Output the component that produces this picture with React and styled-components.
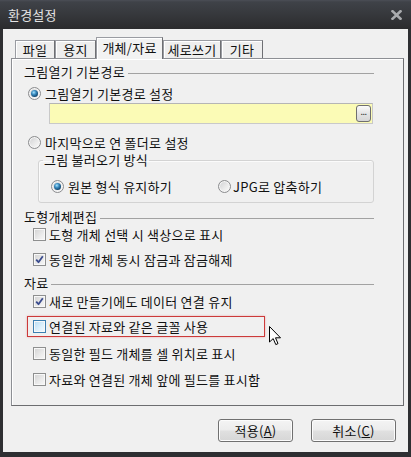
import React from "react";
import styled, { createGlobalStyle } from "styled-components";

const Global = createGlobalStyle`
  html, body { margin: 0; padding: 0; background: #2f3034; }
  body { font-family: "Noto Sans CJK KR", "Noto Sans", sans-serif; }
`;

const Window = styled.div`
  position: relative;
  width: 411px;
  height: 457px;
  box-sizing: border-box;
  background: #2e2f32;
  padding: 0 3px 5px 3px;
  display: flex;
  flex-direction: column;
  font-family: "Noto Sans CJK KR", "Noto Sans", sans-serif;
  font-size: 13px;
  letter-spacing: 0.25px;
  color: #111;
`;

const TitleBar = styled.div`
  height: 29px;
  margin: 0 -3px;
  padding: 0 9px 0 8px;
  box-sizing: border-box;
  display: flex;
  align-items: center;
  justify-content: space-between;
  background: linear-gradient(#4b4e56 0, #3f4248 2px, #36383c 50%, #2b2b2d 100%);
`;

const Title = styled.span`
  color: #e4e4e4;
  font-size: 13px;
  letter-spacing: 0.2px;
  margin-top: -1px;
`;

const Body = styled.div`
  flex: 1;
  background: #f0f0f0;
  padding: 8px 4px 10px 8px;
  display: flex;
  flex-direction: column;
`;

const TabStrip = styled.div`
  display: flex;
  align-items: flex-end;
  height: 21px;
  padding-left: 4px;
`;

const Tab = styled.div`
  position: relative;
  z-index: ${(p) => (p.$active ? 1 : 0)};
  box-sizing: border-box;
  width: ${(p) => p.$w}px;
  height: ${(p) => (p.$active ? 22 : 18)}px;
  margin-bottom: ${(p) => (p.$active ? -1 : 0)}px;
  border: 1px solid #9a9ca2;
  border-bottom: none;
  border-right-color: #6e6f73;
  box-shadow: inset 1px 1px 0 #ffffff;
  background: ${(p) => (p.$active ? "#f2f2f2" : "#eeeeee")};
  display: flex;
  align-items: center;
  justify-content: center;
  padding-bottom: ${(p) => (p.$active ? 2 : 0)}px;
  color: #111;
`;

const Panel = styled.div`
  box-sizing: border-box;
  width: 393px;
  height: 348px;
  border: 1px solid #8d8f94;
  border-right-color: #6c6d70;
  border-bottom-color: #6c6d70;
  box-shadow: inset 1px 1px 0 #ffffff;
  background: #f0f0f0;
  padding: 6px 0 0 12px;
  display: flex;
  flex-direction: column;
`;

const SectionHead = styled.div`
  display: flex;
  align-items: center;
  gap: 3px;
  width: 350px;
  height: 14px;
  line-height: 14px;
  margin-top: ${(p) => p.$mt || 0}px;
  white-space: nowrap;
  &::after {
    content: "";
    flex: 1;
    height: 0;
    border-top: 1px solid #a2a2a2;
    margin-top: 3px;
  }
`;

const Option = styled.div`
  display: flex;
  align-items: center;
  gap: ${(p) => p.$gap || 4}px;
  height: 20px;
  width: ${(p) => (p.$w ? `${p.$w}px` : "auto")};
  margin-top: ${(p) => p.$mt || 0}px;
  margin-left: ${(p) => p.$ml || 0}px;
  white-space: nowrap;
`;

const Radio = styled.span`
  flex-shrink: 0;
  width: 13px;
  height: 13px;
  box-sizing: border-box;
  border-radius: 50%;
  border: 1px solid #8b8c8e;
  background: linear-gradient(135deg, #cfd0d2 0%, #ececec 60%, #fafafa 100%);
  box-shadow: inset 0 0 0 1px #f6f6f6;
  display: flex;
  align-items: center;
  justify-content: center;
  &::after {
    content: "";
    display: ${(p) => (p.$on ? "block" : "none")};
    width: 7px;
    height: 7px;
    border-radius: 50%;
    background: radial-gradient(circle at 40% 35%, #a8e4ff 0, #3a8cc0 35%, #144a74 70%, #0b2c4a 100%);
  }
`;

const Check = styled.span`
  flex-shrink: 0;
  width: 13px;
  height: 13px;
  box-sizing: border-box;
  border: 1px solid ${(p) => (p.$hover ? "#3c7fb1" : "#8e8f8f")};
  background: ${(p) =>
    p.$hover
      ? "linear-gradient(135deg, #b6dcf4 0%, #dff1fc 60%, #f2faff 100%)"
      : "linear-gradient(135deg, #d2d2d2 0%, #ebebeb 60%, #f8f8f8 100%)"};
  box-shadow: inset 0 0 0 1px #f8f8f8;
  display: flex;
  align-items: center;
  justify-content: center;
`;

const PathField = styled.div`
  box-sizing: border-box;
  width: 324px;
  height: 21px;
  margin-left: 25px;
  background: #fbfbb6;
  border: 1px solid #c9c9c9;
  border-top-color: #b5b5b5;
  display: flex;
  align-items: center;
  justify-content: flex-end;
  padding-right: 1px;
`;

const BrowseBtn = styled.span`
  box-sizing: border-box;
  width: 15px;
  height: 17px;
  border: 1px solid #6f6f6f;
  border-radius: 3px;
  background: linear-gradient(#fbfbfb, #e4e4e4 50%, #d6d6d6);
  font-size: 9px;
  line-height: 11px;
  color: #333;
  display: flex;
  justify-content: center;
  letter-spacing: -0.5px;
`;

const GroupBox = styled.fieldset`
  box-sizing: border-box;
  width: 336px;
  margin: 1px 0 0 14px;
  padding: 0 0 6px 12px;
  border: 1px solid #d3d3d3;
  border-radius: 3px;
  box-shadow: inset 1px 1px 0 #fbfbfb;
  min-width: 0;
`;

const GroupLegend = styled.legend`
  margin-left: -8px;
  padding: 0 1px;
  height: 14px;
  line-height: 14px;
`;

const GroupRow = styled.div`
  display: flex;
  margin-top: 9px;
`;

const HighlightRow = styled.div`
  box-sizing: border-box;
  display: flex;
  align-items: center;
  gap: 3px;
  width: 238px;
  height: 21px;
  margin: 5px 0 0 3px;
  padding-left: 5px;
  border: 1px solid #cc3a3a;
  box-shadow: 0 0 2px rgba(230, 90, 90, 0.45);
  white-space: nowrap;
`;

const ButtonRow = styled.div`
  display: flex;
  justify-content: flex-end;
  gap: 18px;
  margin-top: 13px;
  padding-right: 8px;
`;

const Button = styled.div`
  box-sizing: border-box;
  width: ${(p) => p.$w}px;
  height: 23px;
  border: 1px solid #707070;
  border-radius: 3px;
  background: linear-gradient(#f4f4f4 0%, #ececec 48%, #e0e0e0 52%, #d6d6d6 100%);
  box-shadow: inset 0 0 0 1px #fcfcfc;
  display: flex;
  align-items: center;
  justify-content: center;
  color: #111;
  u { text-decoration: underline; }
`;

const Cursor = styled.svg`
  position: absolute;
  left: 269px;
  top: 326px;
`;

const CheckMark = () => (
  <svg width="9" height="9" viewBox="0 0 9 9">
    <path d="M1.2 4.6 L3.5 7.2 L7.8 1.2" fill="none" stroke="#3b4c8e" strokeWidth="1.8" strokeLinejoin="round" />
  </svg>
);

const CheckBox = ({ on, hover }) => <Check $hover={hover}>{on && <CheckMark />}</Check>;

const tabs = [
  { label: "파일", w: 40 },
  { label: "용지", w: 41 },
  { label: "개체/자료", w: 67, active: true },
  { label: "세로쓰기", w: 58 },
  { label: "기타", w: 42 },
];

export default function App() {
  return (
    <>
      <Global />
      <Window>
        <TitleBar>
          <Title>환경설정</Title>
          <svg width="11" height="10" viewBox="0 0 11 10">
            <path d="M1.5 1.2 L9.5 8.8 M9.5 1.2 L1.5 8.8" stroke="#a9abae" strokeWidth="2.6" strokeLinecap="square" />
          </svg>
        </TitleBar>
        <Body>
          <TabStrip>
            {tabs.map((t) => (
              <Tab key={t.label} $w={t.w} $active={t.active}>
                {t.label}
              </Tab>
            ))}
          </TabStrip>
          <Panel>
            <SectionHead>그림열기 기본경로</SectionHead>
            <Option $mt={4} $ml={4}>
              <Radio $on />
              그림열기 기본경로 설정
            </Option>
            <PathField>
              <BrowseBtn>...</BrowseBtn>
            </PathField>
            <Option $mt={8} $ml={4}>
              <Radio />
              마지막으로 연 폴더로 설정
            </Option>
            <GroupBox>
              <GroupLegend>그림 불러오기 방식</GroupLegend>
              <GroupRow>
                <Option $w={167}>
                  <Radio $on />
                  원본 형식 유지하기
                </Option>
                <Option $gap={2}>
                  <Radio />
                  JPG로 압축하기
                </Option>
              </GroupRow>
            </GroupBox>
            <SectionHead $mt={7}>도형개체편집</SectionHead>
            <Option $ml={9} $gap={3}>
              <CheckBox />
              도형 개체 선택 시 색상으로 표시
            </Option>
            <Option $mt={5} $ml={9} $gap={3}>
              <CheckBox on />
              동일한 개체 동시 잠금과 잠금해제
            </Option>
            <SectionHead $mt={7}>자료</SectionHead>
            <Option $mt={1} $ml={9} $gap={3}>
              <CheckBox on />
              새로 만들기에도 데이터 연결 유지
            </Option>
            <HighlightRow>
              <CheckBox hover />
              연결된 자료와 같은 글꼴 사용
            </HighlightRow>
            <Option $mt={6} $ml={9} $gap={3}>
              <CheckBox />
              동일한 필드 개체를 셀 위치로 표시
            </Option>
            <Option $mt={6} $ml={9} $gap={3}>
              <CheckBox />
              자료와 연결된 개체 앞에 필드를 표시함
            </Option>
          </Panel>
          <ButtonRow>
            <Button $w={75}>
              적용(<u>A</u>)
            </Button>
            <Button $w={85}>
              취소(<u>C</u>)
            </Button>
          </ButtonRow>
        </Body>
        <Cursor width="13" height="20" viewBox="0 0 13 20">
          <path d="M0.5 0.5 L0.5 16 L4.2 12.6 L6.8 18.6 L9 17.6 L6.5 11.8 L11.5 11.8 Z" fill="#fff" stroke="#000" strokeWidth="1" strokeLinejoin="miter" />
        </Cursor>
      </Window>
    </>
  );
}
